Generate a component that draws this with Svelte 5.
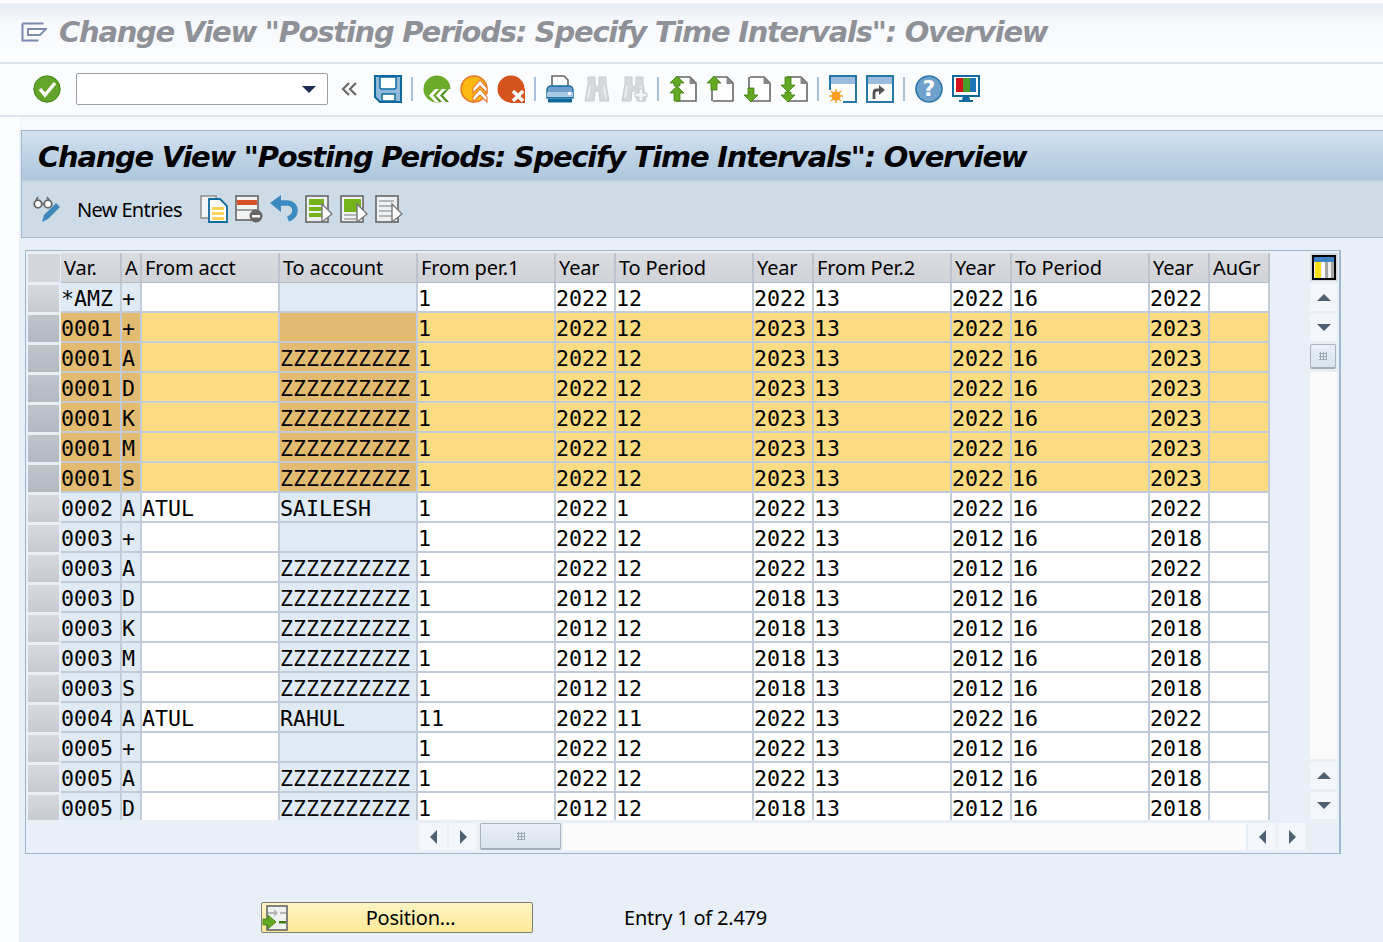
<script>
  const Z = 'ZZZZZZZZZZ';
  const rows = [
    { k: ['*AMZ', '+', '', ''], v: ['1', '2022', '12', '2022', '13', '2022', '16', '2022'] },
    ...['+', 'A', 'D', 'K', 'M', 'S'].map((a) => ({ sel: true, k: ['0001', a, '', a === '+' ? '' : Z], v: ['1', '2022', '12', '2023', '13', '2022', '16', '2023'] })),
    { k: ['0002', 'A', 'ATUL', 'SAILESH'], v: ['1', '2022', '1', '2022', '13', '2022', '16', '2022'] },
    { k: ['0003', '+', '', ''], v: ['1', '2022', '12', '2022', '13', '2012', '16', '2018'] },
    { k: ['0003', 'A', '', Z], v: ['1', '2022', '12', '2022', '13', '2012', '16', '2022'] },
    ...['D', 'K', 'M', 'S'].map((a) => ({ k: ['0003', a, '', Z], v: ['1', '2012', '12', '2018', '13', '2012', '16', '2018'] })),
    { k: ['0004', 'A', 'ATUL', 'RAHUL'], v: ['11', '2022', '11', '2022', '13', '2022', '16', '2022'] },
    { k: ['0005', '+', '', ''], v: ['1', '2022', '12', '2022', '13', '2012', '16', '2018'] },
    { k: ['0005', 'A', '', Z], v: ['1', '2022', '12', '2022', '13', '2012', '16', '2018'] },
    { k: ['0005', 'D', '', Z], v: ['1', '2012', '12', '2018', '13', '2012', '16', '2018'] }
  ];
  const heads = ['Var.', 'A', 'From acct', 'To account', 'From per.1', 'Year', 'To Period', 'Year', 'From Per.2', 'Year', 'To Period', 'Year', 'AuGr'];
  const title = 'Change View "Posting Periods: Specify Time Intervals": Overview';
</script>

{#snippet page(kind)}
  <svg class="ic" viewBox="0 0 28 28">
    <path d="M7 2h14l6 6v18H7" fill="#fff" stroke="#666" stroke-width="1.600" />
    <path d="M20.500 2v7h7z" fill="#888" />
    {#if kind === 'u'}<path d="M6 14v12" stroke="#666" stroke-width="1.600" /><path d="M8 1l7 7h-4v7H5V8H1z" fill="#62a820" stroke="#3f7d12" stroke-width=".8" />{/if}
    {#if kind === 'd'}<path d="M6 2v12" stroke="#666" stroke-width="1.600" /><path d="M5 13h6v7h4l-7 7-7-7h4z" fill="#62a820" stroke="#3f7d12" stroke-width=".8" />{/if}
    {#if kind === 'uu'}<path d="M8 1l7 7h-4v3H5V8H1z" fill="#62a820" stroke="#3f7d12" stroke-width=".8" /><path d="M8 11l7 7h-4v8H5v-8H1z" fill="#62a820" stroke="#3f7d12" stroke-width=".8" />{/if}
    {#if kind === 'dd'}<path d="M5 2h6v8h4l-7 7-7-7h4z" fill="#62a820" stroke="#3f7d12" stroke-width=".8" /><path d="M5 17h6v3h4l-7 7-7-7h4z" fill="#62a820" stroke="#3f7d12" stroke-width=".8" />{/if}
  </svg>
{/snippet}

{#snippet binoc(plus)}
  <svg class="ic" viewBox="0 0 28 28">
    <path d="M5 2h7v7l1 3h2l1-3V2h7v7l3 17H17l-1-10h-4l-1 10H2L5 9z" fill="#d6d8da" stroke="#c8cacd" stroke-width="1" />
    <path d="M7 11l-2 12M21 11l2 12" stroke="#e9ebed" stroke-width="2" fill="none" />
    {#if plus}<path d="M19 14h4v4h4v4h-4v4h-4v-4h-4v-4h4z" fill="#f1f3f4" stroke="#c4c6c9" />{/if}
  </svg>
{/snippet}

{#snippet detail(kind)}
  <svg class="ic" viewBox="0 0 28 28">
    <rect x="1" y="1" width="22" height="26" fill="#eef1f4" stroke="#666" stroke-width="1.600" />
    {#if kind === 'all'}
      <path d="M4 4h15v6H4zM4 12h15v4H4zM4 18h15v4H4z" fill="#74b31c" />
    {:else if kind === 'block'}
      <path d="M4 4h17v13H4z" fill="#74b31c" />
      <path d="M4 19h13v2H4zM4 23h13v2H4z" fill="#b4b6b8" />
    {:else}
      <path d="M4 5h15v2H4zM4 10h15v2H4zM4 15h13v2H4zM4 20h13v2H4z" fill="#b4b6b8" />
    {/if}
    <path d="M17 9l10 10-10 8z" fill="#fff" stroke="#777" stroke-width="1.400" />
  </svg>
{/snippet}

<div class="screen">
  <header class="titlebar">
    <svg class="menuicon" viewBox="0 0 26 20">
      <path d="M1.500 1.500h21M1.500 1.500v17h16" fill="none" stroke="#7b8aae" stroke-width="2" />
      <path d="M7 7h18l-6 6H7z" fill="#fff" stroke="#7b8aae" stroke-width="1.800" />
    </svg>
    <span class="title">{title}</span>
  </header>

  <nav class="toolbar">
    <svg class="ic check" viewBox="0 0 28 28">
      <circle cx="14" cy="14" r="13.500" fill="#63a52a" />
      <circle cx="14" cy="14" r="13" fill="none" stroke="#468a22" />
      <path d="M7 14l5 6L22 8" fill="none" stroke="#fff" stroke-width="3.400" />
    </svg>
    <div class="combo"><span class="caret"></span></div>
    <svg class="dbl" viewBox="0 0 17 14">
      <path d="M8 1L2 7l6 6M15 1L9 7l6 6" fill="none" stroke="#6a6a6a" stroke-width="2.200" />
    </svg>
    <svg class="ic save" viewBox="0 0 28 28">
      <path d="M1 1h26v26H6l-5-5z" fill="#8fb8db" stroke="#0e6a9f" stroke-width="2" />
      <path d="M6 2h16v10a2 2 0 0 1-2 2H8a2 2 0 0 1-2-2z" fill="#fff" stroke="#0e6a9f" stroke-width="1.500" />
      <rect x="8" y="19" width="13" height="7" fill="#fff" stroke="#0e6a9f" stroke-width="1.500" />
    </svg>
    <i class="sep"></i>
    <svg class="ic" viewBox="0 0 28 28">
      <circle cx="14" cy="14" r="13.500" fill="#6bab29" />
      <path d="M14 27a13 13 0 0 1-2-1 13 13 0 0 1 15-10l1 11z" fill="#4e8e24" />
      <path d="M12 14l-6 6.500 6 6.500h4l-6-6.500 6-6.500zM19 14l-6 6.500 6 6.500h4l-6-6.500 6-6.500zM26 14l-6 6.500 6 6.500h2V14z" fill="#fff" />
    </svg>
    <svg class="ic" viewBox="0 0 28 28">
      <circle cx="14" cy="14" r="13" fill="#fdb913" stroke="#e8762c" stroke-width="1.500" />
      <path d="M20 5l7 8v5l-7-7-7 7v-5z" fill="#fff" stroke="#e8762c" stroke-width="1.100" />
      <path d="M20 14l7 8v5l-7-7-7 7v-5z" fill="#fff" stroke="#e8762c" stroke-width="1.100" />
    </svg>
    <svg class="ic" viewBox="0 0 28 28">
      <circle cx="14" cy="14" r="13.500" fill="#d6531e" />
      <rect x="13" y="14" width="15" height="14" fill="#d6531e" />
      <path d="M16 16l10 10M26 16L16 26" stroke="#fff" stroke-width="3.600" />
    </svg>
    <i class="sep"></i>
    <svg class="ic" viewBox="0 0 28 28">
      <path d="M6 11V1h12l4 4v6" fill="#fff" stroke="#666" stroke-width="1.600" />
      <path d="M1 15a4 4 0 0 1 4-4h18a4 4 0 0 1 4 4v8H1z" fill="#6f9fca" stroke="#0e6a9f" stroke-width="1.400" />
      <rect x="1" y="17" width="26" height="5" fill="#a9c8e4" />
      <rect x="22" y="17" width="3" height="3" fill="#fff" />
      <rect x="2" y="24" width="24" height="3.500" fill="#0e6a9f" />
    </svg>
    {@render binoc(false)}
    {@render binoc(true)}
    <i class="sep"></i>
    {@render page('uu')}
    {@render page('u')}
    {@render page('d')}
    {@render page('dd')}
    <i class="sep"></i>
    <svg class="ic" viewBox="0 0 28 28">
      <rect x="1" y="1" width="26" height="26" fill="#fff" stroke="#0e6a9f" stroke-width="1.800" />
      <rect x="2" y="2" width="24" height="7" fill="#9bbcdc" />
      <rect x="0" y="15" width="14" height="13" fill="#f7fafc" />
      <circle cx="7" cy="21" r="4.500" fill="#f7941d" />
      <path d="M7 14v14M0 21h14M2 16l10 10M12 16L2 26" stroke="#f7a421" stroke-width="1.400" />
    </svg>
    <svg class="ic" viewBox="0 0 28 28">
      <rect x="1" y="1" width="26" height="26" fill="#fff" stroke="#0e6a9f" stroke-width="1.800" />
      <rect x="2" y="2" width="24" height="7" fill="#9bbcdc" />
      <path d="M8 24v-6q0-3 3-3h3" fill="none" stroke="#555" stroke-width="2.800" />
      <path d="M13 10l6 5-6 5z" fill="#555" />
    </svg>
    <i class="sep"></i>
    <svg class="ic" viewBox="0 0 28 28">
      <circle cx="14" cy="14" r="13" fill="#6fa2cb" stroke="#2b77a8" stroke-width="1.600" />
      <text class="q" x="14" y="21" text-anchor="middle">?</text>
    </svg>
    <svg class="ic" viewBox="0 0 28 28">
      <rect x="1" y="1" width="26" height="20" fill="#fff" stroke="#0e6a9f" stroke-width="2" />
      <rect x="4" y="3" width="7" height="14" fill="#d4141c" />
      <rect x="11" y="3" width="7" height="14" fill="#4a9e2a" />
      <rect x="18" y="3" width="6" height="14" fill="#1f74b8" />
      <path d="M11 21h6l1 4H10zM7 25h14v2H7z" fill="#0e6a9f" />
    </svg>
  </nav>

  <main class="main">
    <section class="panel">
      <h1 class="panelhead">{title}</h1>
      <div class="actions">
        <svg class="ic glasses" viewBox="0 0 28 28">
          <path d="M9 27l2-7L23 8l4 4-12 12z" fill="#3f88bd" />
          <circle cx="5" cy="9" r="3.800" fill="#fff" stroke="#666" stroke-width="1.800" />
          <circle cx="15" cy="9" r="3.800" fill="#fff" stroke="#666" stroke-width="1.800" />
          <path d="M9 9h2M3 5l2-3M16 5l-2-3" stroke="#666" stroke-width="1.600" fill="none" />
        </svg>
        <span class="newentries">New Entries</span>
        <div class="actionicons">
          <svg class="ic" viewBox="0 0 28 28">
            <rect x="1" y="1" width="15" height="22" fill="#f2f3f5" stroke="#888" stroke-width="1.400" />
            <path d="M9 4h11l7 7v16H9z" fill="#fff" stroke="#0e6a9f" stroke-width="1.800" />
            <path d="M12 12h12v3H12zM12 17h12v3H12zM12 22h12v3H12z" fill="#fbd35c" />
          </svg>
          <svg class="ic" viewBox="0 0 28 28">
            <rect x="1" y="1" width="22" height="24" fill="#f2f3f5" stroke="#666" stroke-width="1.600" />
            <rect x="2" y="5" width="20" height="5" fill="#d9532a" />
            <path d="M2 15h20" stroke="#777" stroke-width="1.400" />
            <circle cx="21" cy="21" r="6.500" fill="#666" />
            <rect x="17" y="20" width="8" height="2.500" fill="#fff" />
          </svg>
          <svg class="ic" viewBox="0 0 28 28">
            <path d="M8 8h9a7.500 7.500 0 0 1 8 7.500c0 4-3 7-7 8.500" fill="none" stroke="#3b8ac0" stroke-width="5.500" />
            <path d="M11 0L0 8l11 9z" fill="#3b8ac0" />
          </svg>
          {@render detail('all')}
          {@render detail('block')}
          {@render detail('none')}
        </div>
      </div>
    </section>

    <section class="tablebox">
      <div class="upper">
        <div class="table">
          <div class="row head">
            <div class="gut"></div>
            {#each heads as h}<div class="hcell">{h}</div>{/each}
          </div>
          {#each rows as r}
            <div class="row" class:sel={r.sel}>
              <div class="gut"></div>
              <div class="c key">{r.k[0]}</div>
              <div class="c key">{r.k[1]}</div>
              <div class="c">{r.k[2]}</div>
              <div class="c key">{r.k[3]}</div>
              {#each r.v as v}<div class="c">{v}</div>{/each}
              <div class="c"></div>
            </div>
          {/each}
        </div>
        <div class="vbar">
          <svg class="colset" viewBox="0 0 28 28">
            <rect x="0" y="0" width="28" height="28" fill="#d3d7dc" />
            <rect x="3" y="3" width="22" height="23" fill="#eee" stroke="#000" stroke-width="2" />
            <rect x="4" y="4" width="20" height="5" fill="#3f83c5" />
            <rect x="5" y="9" width="6" height="16" fill="#f7e016" />
            <rect x="12" y="9" width="3" height="16" fill="#fff" />
            <rect x="15" y="9" width="3" height="16" fill="#a6a6a6" />
            <rect x="21" y="9" width="3" height="16" fill="#a6a6a6" />
          </svg>
          <button class="sb"><span class="tri up"></span></button>
          <button class="sb"><span class="tri down"></span></button>
          <div class="thumb v"><span class="grip"></span></div>
          <div class="track v"></div>
          <button class="sb"><span class="tri up"></span></button>
          <button class="sb"><span class="tri down"></span></button>
        </div>
      </div>
      <div class="hbar">
        <button class="sb"><span class="tri left"></span></button>
        <button class="sb"><span class="tri right"></span></button>
        <div class="thumb h"><span class="grip"></span></div>
        <div class="track h"></div>
        <button class="sb"><span class="tri left"></span></button>
        <button class="sb"><span class="tri right"></span></button>
      </div>
    </section>

    <footer class="foot">
      <button class="position">
        <svg class="posicon" viewBox="0 0 26 26">
          <rect x="5" y="1" width="20" height="24" fill="#eef1ee" stroke="#666" stroke-width="1.600" />
          <path d="M6 7h6V4l4 4-4 4V9H6z" fill="#b4b6b8" />
          <path d="M18 7h6v2h-6z" fill="#b4b6b8" />
          <path d="M1 14h5v-4l8 7-8 7v-4H1z" fill="#62a820" stroke="#3f7d12" stroke-width=".8" />
          <path d="M17 16h7v2.500h-7z" fill="#3f7d12" />
        </svg>
        <span>Position...</span>
      </button>
      <span class="entry">Entry 1 of 2.479</span>
    </footer>
  </main>
</div>

<style>
  :global(body) { margin: 0; background: #fff; }
  .screen { width: 1383px; height: 942px; overflow: hidden; display: flex; flex-direction: column; font-family: "Noto Sans", sans-serif; color: #000; background: #fbfcfe; }
  .titlebar { height: 61px; margin-top: 3px; flex: none; box-sizing: border-box; display: flex; align-items: center; gap: 12px; padding: 0 0 3px 21px; background: linear-gradient(#e6ecf4, #f6f8fb 30%, #fcfdfe); border-top: 1px solid #eef2f8; border-bottom: 2px solid #dde3ea; }
  .menuicon { width: 26px; height: 20px; flex: none; }
  .title { font: italic 700 29px "DejaVu Sans", sans-serif; letter-spacing: -1.270px; color: #8e9197; white-space: nowrap; }
  .toolbar { height: 53px; flex: none; box-sizing: border-box; display: flex; align-items: center; gap: 9px; padding: 0 0 2px 33px; background: #fbfcfe; border-bottom: 2px solid #dde3ea; }
  .ic { width: 28px; height: 28px; flex: none; display: block; }
  .q { font: 700 22px "DejaVu Sans", sans-serif; fill: #fff; }
  .sep { width: 2px; height: 24px; margin-right: 1px; background: #a9c2da; flex: none; }
  .combo { width: 252px; height: 32px; margin-left: 6px; margin-right: 4px; box-sizing: border-box; border: 1px solid #9a9fa5; border-radius: 2px; background: #fff; position: relative; flex: none; }
  .caret { position: absolute; right: 11px; top: 12px; width: 0; height: 0; border-left: 7px solid transparent; border-right: 7px solid transparent; border-top: 7px solid #1f2d52; }
  .dbl { width: 17px; height: 14px; flex: none; margin-right: 7px; }
  .main { flex: 1; margin-left: 19px; padding-top: 13px; background: linear-gradient(#f6f9fc 13px, #e8eff7 13px); display: flex; flex-direction: column; }
  .panel { margin-left: 2px; flex: none; border-top: 1px solid #9fb6cc; border-left: 1px solid #9fb6cc; border-bottom: 1px solid #a3b7ca; background: #cddbe7; }
  .panelhead { margin: 0; height: 51px; box-sizing: border-box; padding-left: 16px; font: italic 700 29px/52px "DejaVu Sans", sans-serif; letter-spacing: -1.270px; white-space: nowrap; color: #000; background: linear-gradient(#d2e1ef, #adc6dc); border-bottom: 2px solid #c3d2df; }
  .actions { height: 55px; box-sizing: border-box; display: flex; align-items: center; padding: 0 0 2px 11px; }
  .newentries { font-size: 20px; margin: 2px 0 0 16px; letter-spacing: -.65px; white-space: nowrap; }
  .actionicons { display: flex; gap: 7px; margin-left: 18px; }
  .tablebox { margin: 12px 0 0 6px; width: 1316px; height: 604px; box-sizing: border-box; border: 1px solid #9db7d2; border-right-width: 2px; padding: 2px 0 0 1px; display: flex; flex-direction: column; flex: none; }
  .upper { display: flex; height: 567px; flex: none; }
  .table { width: 1244px; height: 567px; overflow: hidden; flex: none; }
  .row { display: grid; grid-template-columns: 34px 61px 20px 138px 138px 138px 60px 138px 60px 138px 60px 138px 60px 60px; height: 30px; }
  .gut { box-sizing: border-box; margin: 1px 2px 1px 1px; background: linear-gradient(#d6d9de, #c7cbd1); box-shadow: inset 0 1px 0 #eceef1; }
  .row.sel .gut { background: linear-gradient(#bfc5cc, #b2b9c1); }
  .head .gut { margin: 1px 1px 1px 1px; background: #d3d6dc; box-shadow: none; }
  .hcell { box-sizing: border-box; padding-left: 3px; font-size: 20px; line-height: 29px; letter-spacing: -.15px; white-space: nowrap; overflow: hidden; background: linear-gradient(#dadce1, #cfd2d7); border-right: 2px solid #bcc3cc; border-bottom: 1px solid #b5bcc5; }
  .c { box-sizing: border-box; padding-left: 0; font: 21.6px/31px "DejaVu Sans Mono", monospace; white-space: nowrap; overflow: hidden; background: #fff; border-right: 2px solid #c2ccd9; border-bottom: 2px solid #c2ccd9; }
  .c.key { background: #dfeaf4; }
  .sel .c { background: #fcdb81; }
  .sel .c.key { background: #e2bb71; }
  .vbar { margin: 0 0 1px 39px; width: 28px; display: flex; flex-direction: column; gap: 3px; flex: none; }
  .colset { width: 28px; height: 28px; flex: none; margin: 0; }
  .sb { width: 27px; height: 27px; flex: none; padding: 0; border: 0; background: #f3f6fa; display: flex; align-items: center; justify-content: center; }
  .tri { width: 0; height: 0; display: block; }
  .tri.up { border: 7px solid transparent; border-top: 0; border-bottom: 7px solid #4e6072; }
  .tri.down { border: 7px solid transparent; border-bottom: 0; border-top: 7px solid #4e6072; }
  .tri.left { border: 7px solid transparent; border-left: 0; border-right: 7px solid #4e6072; }
  .tri.right { border: 7px solid transparent; border-right: 0; border-left: 7px solid #4e6072; }
  .thumb { box-sizing: border-box; border: 1px solid #a8b4c0; border-bottom: 2px solid #a3aeb9; border-radius: 2px; background: linear-gradient(#e9eff5, #d9e3ec); display: flex; align-items: center; justify-content: center; flex: none; }
  .thumb.v { width: 26px; height: 25px; }
  .thumb.h { width: 81px; height: 27px; margin-left: 1px; }
  .grip { width: 8px; height: 8px; background-image: radial-gradient(#a0a9b3 1px, transparent 1.2px); background-size: 3px 3px; }
  .track { background: #fbfbfc; flex: 1; }
  .track.v { width: 27px; }
  .hbar { display: flex; gap: 2px; margin: 3px 0 0 392px; width: 887px; height: 27px; flex: none; }
  .hbar .sb { width: 28px; }
  .foot { display: flex; align-items: center; margin: 48px 0 0 242px; flex: none; }
  .position { width: 272px; height: 31px; box-sizing: border-box; padding: 0; border: 1px solid #7d7d78; border-radius: 2px; background: linear-gradient(#fff5c4, #ffe999); position: relative; font: 20px "Noto Sans", sans-serif; color: #000; letter-spacing: -.2px; flex: none; }
  .position span { display: block; padding-left: 27px; }
  .posicon { position: absolute; left: 0; top: 2px; width: 26px; height: 26px; }
  .entry { margin-left: 91px; font-size: 20px; letter-spacing: -.2px; white-space: nowrap; }
</style>
